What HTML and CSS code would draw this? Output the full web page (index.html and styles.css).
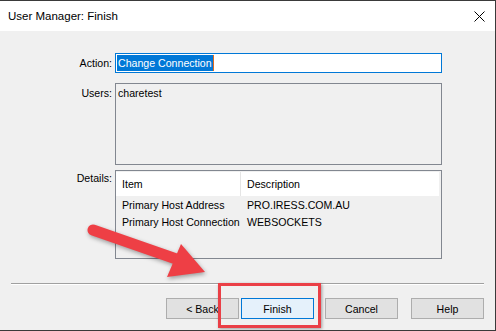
FILE: index.html
```
<!DOCTYPE html>
<html>

<head>
    <title>User Manager: Finish</title>
    <link rel="stylesheet" href="styles.css">
</head>

<body>
    <div class="window">
        <div class="titlebar">
            <span class="title">User Manager: Finish</span>
            <svg class="close" width="11" height="11" viewBox="0 0 11 11">
                <path d="M0.5 0.5 L10.5 10.5 M10.5 0.5 L0.5 10.5" stroke="#000" stroke-width="1" fill="none" />
            </svg>
        </div>
        <div class="dlgBody">
            <div class="row rowAction">
                <label class="lbl">Action:</label>
                <div class="field input"><span class="sel">Change Connection</span><span class="caret"></span></div>
            </div>
            <div class="row rowUsers">
                <label class="lbl">Users:</label>
                <div class="field users">charetest</div>
            </div>
            <div class="row rowDetails">
                <label class="lbl">Details:</label>
                <div class="field details">
                    <div class="listHead">
                        <span class="col1">Item</span>
                        <span class="col2">Description</span>
                    </div>
                    <div class="listRow">
                        <span class="col1">Primary Host Address</span>
                        <span class="col2">PRO.IRESS.COM.AU</span>
                    </div>
                    <div class="listRow">
                        <span class="col1">Primary Host Connection</span>
                        <span class="col2">WEBSOCKETS</span>
                    </div>
                </div>
            </div>
            <div class="separator"></div>
            <div class="buttons">
                <button type="button" class="btn btnBack">&lt; Back</button>
                <button type="button" class="btn btnFinish">Finish</button>
                <button type="button" class="btn btnCancel">Cancel</button>
                <button type="button" class="btn btnHelp">Help</button>
            </div>
        </div>
        <div class="highlight"></div>
        <svg class="arrow" width="496" height="331" viewBox="0 0 496 331">
            <line x1="93" y1="230" x2="182" y2="261" stroke="#ee3f45" stroke-width="11" stroke-linecap="round" />
            <polygon points="205,272 181,244 167,277" fill="#ee3f45" />
        </svg>
    </div>
</body>

</html>
```
FILE: styles.css
```
* {
    padding: 0;
    margin: 0;
    box-sizing: border-box;
}

body {
    font-family: "Liberation Sans", Arial, sans-serif;
    font-size: 10.6px;
    color: #000;
    background: #f0f0f0;
}

.window {
    position: relative;
    width: 496px;
    height: 331px;
    border-top: 1px solid #3a3a3a;
    border-right: 1px solid #3a3a3a;
    border-bottom: 1px solid #3a3a3a;
    background: #f0f0f0;
    display: flex;
    flex-direction: column;
    overflow: hidden;
}

.titlebar {
    height: 30px;
    background: #fff;
    display: flex;
    align-items: center;
    justify-content: space-between;
    padding-left: 8px;
    padding-right: 10px;
}

.title {
    font-size: 11.5px;
    color: #000;
}

.close {
    display: block;
}

.dlgBody {
    flex: 1;
    padding-top: 22px;
}

.row {
    display: flex;
    white-space: nowrap;
}

.lbl {
    width: 115px;
    text-align: right;
    padding-right: 3px;
    line-height: 13px;
    color: #000;
}

.field {
    width: 327px;
}

.rowAction {
    align-items: center;
}

.input {
    height: 20px;
    border: 1px solid #0078d7;
    background: #fff;
    padding: 1px 1px;
    display: flex;
    align-items: stretch;
}

.sel {
    background: #0078d7;
    color: #fff;
    padding: 1px 1px 0 1px;
    line-height: 15px;
}

.caret {
    width: 1px;
    background: #e06a1e;
}

.rowUsers {
    margin-top: 10px;
}

.rowUsers .lbl {
    padding-top: 4px;
}

.users {
    height: 82px;
    border: 1px solid #828790;
    padding: 3px 2px;
    line-height: 13px;
}

.rowDetails {
    margin-top: 5px;
}

.rowDetails .lbl {
    padding-top: 2px;
}

.details {
    height: 89px;
    border: 1px solid #828790;
    padding: 1px 2px 0 0;
}

.listHead {
    height: 24px;
    background: #fff;
    display: flex;
    align-items: center;
}

.listHead .col1 {
    border-right: 1px solid #e5e5e5;
    height: 24px;
    line-height: 24px;
}

.col1 {
    width: 125px;
    padding-left: 6px;
    white-space: nowrap;
    overflow: hidden;
}

.col2 {
    padding-left: 6px;
    white-space: nowrap;
}

.listRow {
    display: flex;
    height: 17px;
    line-height: 17px;
}

.listHead + .listRow {
    margin-top: 1px;
}

.separator {
    margin: 24px 11px 0 11px;
    border-top: 1px solid #a0a0a0;
    border-bottom: 1px solid #fff;
}

.buttons {
    display: flex;
    justify-content: flex-end;
    padding-right: 11px;
    margin-top: 13px;
}

.btn {
    width: 73px;
    height: 21px;
    font-family: "Liberation Sans", Arial, sans-serif;
    font-size: 10.6px;
    color: #000;
    background: #e1e1e1;
    border: 1px solid #adadad;
}

.btnBack {
    margin-right: 2px;
}

.btnFinish {
    background: #e5f1fb;
    border-color: #0078d7;
    margin-right: 11px;
}

.btnCancel {
    margin-right: 13px;
}

.highlight {
    position: absolute;
    left: 218px;
    top: 282px;
    width: 103px;
    height: 45px;
    border: 3px solid #ea3f46;
    box-shadow: 1px 1px 3px rgba(0, 0, 0, 0.35);
}

.arrow {
    position: absolute;
    left: 0;
    top: -1px;
    pointer-events: none;
    filter: drop-shadow(1px 2px 2px rgba(0, 0, 0, 0.35));
}
```
